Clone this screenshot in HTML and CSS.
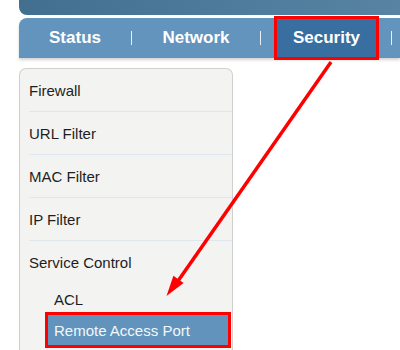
FILE: index.html
```html
<!DOCTYPE html>
<html lang="en">
<head>
    <meta charset="UTF-8">
    <title>Router - Security</title>
    <link rel="stylesheet" href="styles.css">
</head>
<body>
    <div class="page">
        <div class="top-bar"></div>
        <div class="nav">
            <div class="nav-item first">Status</div>
            <span class="nav-sep"></span>
            <div class="nav-item">Network</div>
            <span class="nav-sep"></span>
            <div class="nav-item active">Security</div>
            <span class="nav-sep"></span>
        </div>

        <div class="sidebar">
            <div class="menu-item">Firewall</div>
            <div class="menu-item">URL Filter</div>
            <div class="menu-item">MAC Filter</div>
            <div class="menu-item">IP Filter</div>
            <div class="menu-item last">Service Control</div>
            <div class="sub-item">ACL</div>
            <div class="sub-item selected">Remote Access Port</div>
        </div>
    </div>

    <!-- annotation arrow -->
    <svg class="arrow" width="400" height="350" viewBox="0 0 400 350">
        <line x1="331" y1="62" x2="178" y2="281" stroke="#ff0000" stroke-width="3.5" />
        <polygon points="166.5,296 173.4,275.8 183.6,283" fill="#ff0000" />
    </svg>
</body>
</html>
```

FILE: styles.css
```css
body {
    margin: 0;
    background: #fff;
    font-family: 'Liberation Sans', Arial, sans-serif;
    color: #1e1e1e;
    overflow: hidden;
    height: 350px;
}

.page {
    padding-left: 19px;
}

.top-bar {
    height: 15px;
    background: linear-gradient(90deg, #426f8f, #4f7b9c 60%, #5883a3);
    border-bottom-left-radius: 8px;
    margin-bottom: 3px;
}

.nav {
    display: flex;
    align-items: center;
    height: 40px;
    background: #6294bd;
    border-top-left-radius: 8px;
    box-shadow: 0 2px 3px rgba(0, 0, 0, 0.18);
    color: #fff;
    font-size: 17px;
    font-weight: bold;
}

.nav-item {
    display: flex;
    align-items: center;
    justify-content: center;
    width: 128px;
    height: 100%;
}

.nav-item.first {
    width: 112px;
}

.nav-item.active {
    width: 101px;
    margin: 0 14px 0 15px;
    background: #386ea0;
    outline: 3px solid #ff0000;
    outline-offset: -1px;
    position: relative;
    z-index: 1;
}

.nav-sep {
    width: 1px;
    height: 14px;
    background: #e8eff6;
}

.sidebar {
    margin-top: 10px;
    width: 212px;
    height: 281px;
    background: #f3f4f2;
    border: 1px solid #cfd1cf;
    border-bottom: none;
    border-radius: 7px 7px 0 0;
    font-size: 15px;
}

.menu-item {
    margin-left: 9px;
    padding-top: 2px;
    height: 40px;
    line-height: 40px;
    border-bottom: 1px solid #dfe6ee;
}

.menu-item.last {
    border-bottom: none;
}

.sub-item {
    margin-left: 34px;
    padding-top: 2px;
    height: 30px;
    line-height: 30px;
}

.sub-item.selected {
    margin: 0 4px 0 28px;
    padding: 1px 0 0 6px;
    height: 29px;
    line-height: 29px;
    background: #6193bc;
    color: #f4f7fa;
    outline: 3px solid #ff0000;
}

.arrow {
    position: absolute;
    top: 0;
    left: 0;
    z-index: 2;
}
```
